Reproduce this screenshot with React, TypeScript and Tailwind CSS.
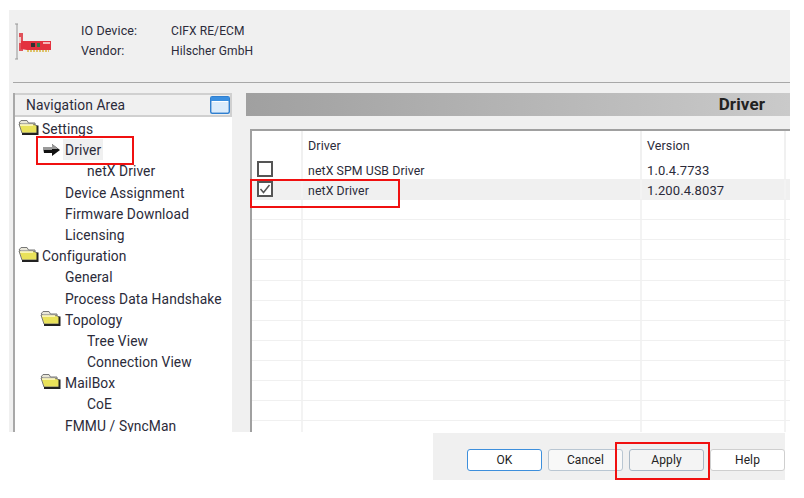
import React from "react";

const Folder = () => (
  <svg width="21" height="17" viewBox="0 0 21 17" className="shrink-0">
    <path d="M1 4 L3 1.5 H9 L10.5 4 H17 L17 6 H4 L1 4Z" fill="#e8e6d8" stroke="#777" strokeWidth="1" />
    <path d="M1 5 H15 L19.5 7 V14 H4 Z" fill="#e9e25a" stroke="#777" strokeWidth="1" />
    <path d="M18.5 6.5 H20.5 V16 H4 V14 H18.5Z" fill="#222" />
    <path d="M2 6 H15" stroke="#fffbd0" strokeWidth="1.5" />
  </svg>
);

const Arrow = () => (
  <svg width="18" height="14" viewBox="0 0 18 14" className="shrink-0">
    <path d="M0 4 H9 V1 L17 7 L9 13 V10 H1Z" fill="#111" />
    <path d="M0 4 H9 V1 L13 4 L15 6 H9 V7 H0Z" fill="#9a9a9a" />
  </svg>
);

const Card = () => (
  <svg width="40" height="38" viewBox="0 0 40 38">
    <path d="M4 1 V36" stroke="#b5b5b5" strokeWidth="1.5" />
    <path d="M2 1 H5 M2 36 H5" stroke="#999" strokeWidth="1" />
    <rect x="6" y="10" width="4" height="18" fill="#e0525a" />
    <rect x="6" y="14" width="2" height="6" fill="#f3c9c9" />
    <path d="M8 18 H38 V27 H14 L8 26Z" fill="#e3323f" />
    <rect x="18" y="20" width="4" height="4" fill="#333" />
    <rect x="24" y="20" width="3" height="4" fill="#2a7a48" />
    <rect x="30" y="19" width="7" height="2" fill="#f5b7b7" />
    <path d="M14 28 H36" stroke="#d8b23a" strokeWidth="1.5" strokeDasharray="2 1" />
  </svg>
);

const NavIcon = () => (
  <svg width="20" height="18" viewBox="0 0 20 18">
    <rect x="0.75" y="0.75" width="18.5" height="16.5" rx="1.5" fill="#fff" stroke="#2f7fd0" strokeWidth="1.5" />
    <rect x="1" y="1" width="18" height="4" fill="#3b8fe0" />
    <rect x="2" y="6" width="16" height="10" fill="#dcecfb" />
  </svg>
);

type Row = { t: string; lv: number; folder?: boolean; arrow?: boolean };
const rows: Row[] = [
  { t: "Settings", lv: 0, folder: true },
  { t: "Driver", lv: 1, arrow: true },
  { t: "netX Driver", lv: 2 },
  { t: "Device Assignment", lv: 1 },
  { t: "Firmware Download", lv: 1 },
  { t: "Licensing", lv: 1 },
  { t: "Configuration", lv: 0, folder: true },
  { t: "General", lv: 1 },
  { t: "Process Data Handshake", lv: 1 },
  { t: "Topology", lv: 1, folder: true },
  { t: "Tree View", lv: 2 },
  { t: "Connection View", lv: 2 },
  { t: "MailBox", lv: 1, folder: true },
  { t: "CoE", lv: 2 },
  { t: "FMMU / SyncMan", lv: 1 },
];

const TreeRow = ({ r }: { r: Row }) => {
  const textLeft = r.lv === 0 ? "pl-[27px]" : r.lv === 1 ? "pl-[50px]" : "pl-[72px]";
  return (
    <div className={`relative h-[21.2px] leading-[23px] whitespace-nowrap ${textLeft}`}>
      {r.folder && (
        <span className={`absolute top-[1px] ${r.lv === 0 ? "left-[3px]" : "left-[25px]"}`}>
          <Folder />
        </span>
      )}
      {r.arrow && (
        <span className="absolute top-[4px] left-[28px]">
          <Arrow />
        </span>
      )}
      {r.arrow ? <span className="bg-[#f0f0f0] inline-block px-[2px] -ml-[2px] h-[21px]">{r.t}</span> : r.t}
    </div>
  );
};

const Check = ({ on }: { on?: boolean }) => (
  <span className="block w-[16px] h-[16px] border-2 border-[#555] bg-white">
    {on && (
      <svg width="12" height="12" viewBox="0 0 12 12">
        <path d="M1.5 6 L4.5 9.5 L10.5 2" fill="none" stroke="#555" strokeWidth="1.5" />
      </svg>
    )}
  </span>
);

const Btn = ({ t, cls }: { t: string; cls: string }) => (
  <div className={`w-[75px] h-[22px] rounded-[3px] border flex items-center justify-center text-[12px] text-[#222] ${cls}`}>
    {t}
  </div>
);

const TableRow = ({ a, b, c, hl }: { a?: React.ReactNode; b?: string; c?: string; hl?: boolean }) => (
  <div className={`flex h-[20.1px] leading-[22px] shrink-0 border-b border-[#f0f0f0] ${hl ? "bg-[#f0f0f0]" : ""}`}>
    <div className="w-[49px] shrink-0 pl-[5px] pt-[1px] flex">{a}</div>
    <div className="w-[339px] shrink-0 pl-[5px] border-l-2 border-[#f3f3f3] text-[12.3px]">{b}</div>
    <div className="w-[144px] shrink-0 pl-[5px] border-l-2 border-[#f3f3f3]">{c}</div>
    <div className="flex-1 border-l-2 border-[#f3f3f3]" />
  </div>
);

export default function App() {
  return (
    <div
      className="w-[804px] h-[498px] bg-white relative overflow-hidden text-[13.8px] tracking-[0.1px] text-[#2b2b3a]"
      style={{ fontFamily: 'Roboto, "Noto Sans", sans-serif' }}
    >
      <div className="h-[10px]" />
      <div className="ml-[9px] w-[781px] h-[422px] bg-[#f0f0f0] flex flex-col overflow-hidden">
        <div className="h-[72px] shrink-0 flex relative">
          <div className="pt-[13px] pl-[4px] w-[72px]">
            <Card />
          </div>
          <div className="pt-[11px] text-[12.5px] leading-[20px]">
            <div className="flex">
              <span className="w-[90px]">IO Device:</span>
              <span className="text-[12px]">CIFX RE/ECM</span>
            </div>
            <div className="flex">
              <span className="w-[90px]">Vendor:</span>
              <span className="text-[12px]">Hilscher GmbH</span>
            </div>
          </div>
        </div>
        <div className="h-[1px] ml-[4px] bg-[#a8a8a8] shrink-0" />
        <div className="flex flex-1 min-h-0 pt-[10px] pl-[4px]">
          <div className="w-[219px] shrink-0 border-l-2 border-[#a8a8a8] flex flex-col">
            <div className="h-[24px] shrink-0 border-t-2 border-r-2 border-b-2 border-[#d0d0d0] flex items-center pl-[11px] justify-between">
              <span className="mt-[1px]">Navigation Area</span>
              <NavIcon />
            </div>
            <div className="flex-1 bg-white pt-[1px] min-h-0 overflow-hidden">
              {rows.map((r) => (
                <TreeRow key={r.t} r={r} />
              ))}
            </div>
          </div>
          <div className="flex-1 min-w-0 pl-[14px] flex flex-col">
            <div className="h-[23px] shrink-0 bg-gradient-to-r from-[#a0a0a0] to-[#cacaca] flex items-center justify-end pr-[25px] font-bold text-[17px] text-[#222]">
              Driver
            </div>
            <div className="ml-[4px] mt-[13px] flex-1 min-h-0 bg-white border-t-2 border-l-2 border-[#a0a0a0] overflow-hidden flex flex-col">
              <div className="flex h-[29px] shrink-0 text-[12.5px] leading-[29px]">
                <div className="w-[49px] shrink-0" />
                <div className="w-[339px] shrink-0 pl-[5px] border-l-2 border-[#f0f0f0]">Driver</div>
                <div className="w-[144px] shrink-0 pl-[5px] border-l-2 border-[#f0f0f0]">Version</div>
                <div className="flex-1 border-l-2 border-[#f0f0f0]" />
              </div>
              <div className="text-[13px]">
                <TableRow a={<Check />} b="netX SPM USB Driver" c="1.0.4.7733" />
                <TableRow a={<Check on />} b="netX Driver" c="1.200.4.8037" hl />
                {Array.from({ length: 12 }).map((_, i) => (
                  <TableRow key={i} />
                ))}
              </div>
            </div>
          </div>
        </div>
      </div>
      <div className="ml-[433px] mt-[1px] w-[352px] h-[47px] bg-[#f0f0f0] pl-[34px] pt-[16px] flex gap-[6px]">
        <Btn t="OK" cls="bg-white border-[#3d8fdc]" />
        <Btn t="Cancel" cls="bg-[#f8f8f8] border-[#b9c6d2]" />
        <Btn t="Apply" cls="bg-[#f4f4f4] border-[#a9b8c6]" />
        <Btn t="Help" cls="bg-white border-[#cfcfcf]" />
      </div>
      <div className="absolute left-[36px] top-[136px] w-[98px] h-[29px] border-2 border-[#f01010]" />
      <div className="absolute left-[250px] top-[179px] w-[150px] h-[29px] border-2 border-[#f01010]" />
      <div className="absolute left-[615px] top-[442px] w-[95px] h-[38px] border-2 border-[#f01010]" />
    </div>
  );
}
